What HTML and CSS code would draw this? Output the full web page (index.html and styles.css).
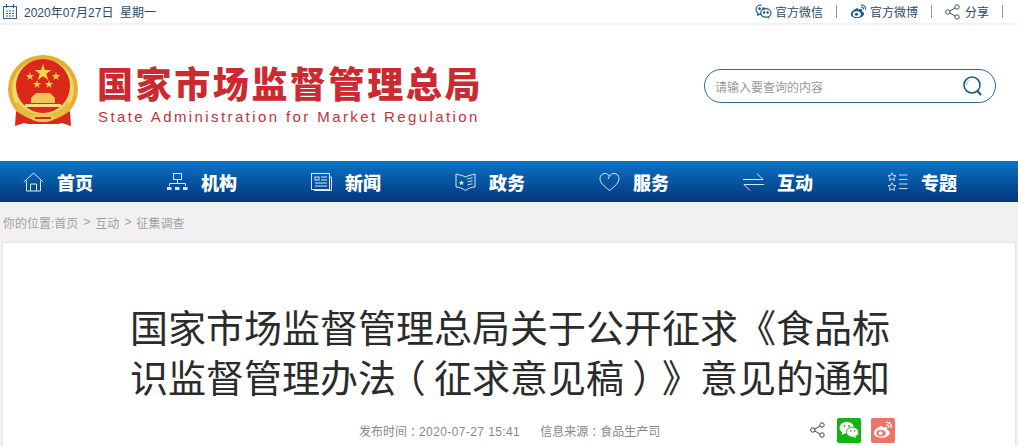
FILE: index.html
```html
<!DOCTYPE html>
<html lang="zh-CN">
<head>
  <meta charset="UTF-8">
  <title>国家市场监督管理总局</title>
  <link rel="stylesheet" href="styles.css">
</head>
<body>
  <div class="topbar">
    <div class="date">
      <svg class="cal-icon" viewBox="0 0 14 15" width="14" height="15" fill="none" stroke="#2f5f8f">
        <rect x="0.5" y="2.5" width="13" height="12"/>
        <path d="M3.5 0v4M10.5 0v4"/>
        <path d="M3 7h2M6 7h2M9 7h2M3 9.5h2M6 9.5h2M9 9.5h2M3 12h2M6 12h2M9 12h2"/>
      </svg>
      <span>2020年07月27日&nbsp; 星期一</span>
    </div>
    <div class="toplinks">
      <a class="toplink">
        <svg viewBox="0 0 18 16" width="17" height="15" fill="none" stroke="#1f5f8f" stroke-width="1.3">
          <path d="M7 1C3.5 1 1 3.2 1 6c0 1.6.8 3 2.2 3.9L2.800 12l2.300-1.200c.5.100 1 .2 1.600.2"/>
          <ellipse cx="11.500" cy="9.500" rx="5.500" ry="4.600"/>
          <path d="M13.500 13.400l1.200 1.800"/>
          <circle cx="4.800" cy="5" r=".8" fill="#1f5f8f"/>
          <circle cx="9" cy="5" r=".8" fill="#1f5f8f"/>
          <circle cx="9.600" cy="9" r=".7" fill="#1f5f8f"/>
          <circle cx="13.400" cy="9" r=".7" fill="#1f5f8f"/>
        </svg>
        <span>官方微信</span>
      </a>
      <i class="sep"></i>
      <a class="toplink">
        <svg viewBox="0 0 18 16" width="17" height="15">
          <path d="M7.500 4.500C4 5.500 .8 8.400 .8 10.800c0 2.500 3.200 4.200 6.700 4.200 4.200 0 7.500-2.200 7.500-4.600 0-1.500-1.300-2.200-2.300-2.500.4-1.100.3-2.200-.6-2.500-1-.4-2.700.2-3.400.6.200-.9-.1-2.200-.7-1.500z" fill="#1f5f8f"/>
          <ellipse cx="7.200" cy="10.800" rx="4.300" ry="3.100" fill="#fff"/>
          <circle cx="6.800" cy="10.900" r="1.700" fill="#1f5f8f"/>
          <path d="M11.500 1.200c3-.6 5.600 1.600 5 4.800M11.800 3.400c1.500-.3 2.800.8 2.500 2.400" fill="none" stroke="#1f5f8f" stroke-width="1.200"/>
        </svg>
        <span>官方微博</span>
      </a>
      <i class="sep"></i>
      <a class="toplink share-link">
        <svg viewBox="0 0 15 16" width="15" height="16" fill="none" stroke="#456" stroke-width="1">
          <circle cx="2.800" cy="8" r="2.200"/><circle cx="12" cy="3" r="2.200"/><circle cx="12" cy="13" r="2.200"/>
          <path d="M4.800 7l5.300-3M4.800 9l5.300 3"/>
        </svg>
        <span>分享</span>
      </a>
      <i class="sep"></i>
    </div>
  </div>

  <header class="masthead">
    <div class="brand">
      <svg class="emblem" viewBox="0 0 70 73" width="70" height="73">
        <ellipse cx="35" cy="34" rx="35" ry="34" fill="#e3b02f"/>
        <ellipse cx="35" cy="34" rx="31" ry="30" fill="#f3d56a"/>
        <circle cx="35" cy="31" r="27" fill="#dc281b"/>
        <polygon points="35,9 37,15 43.500,15 38.300,18.800 40.200,25 35,21.200 29.800,25 31.700,18.800 26.500,15 33,15" fill="#f6d54b"/>
        <polygon points="22,17 23,20 26.200,20 23.600,21.900 24.600,25 22,23.100 19.400,25 20.400,21.900 17.800,20 21,20" fill="#f6d54b"/>
        <polygon points="48,17 49,20 52.200,20 49.600,21.900 50.600,25 48,23.100 45.400,25 46.400,21.900 43.800,20 47,20" fill="#f6d54b"/>
        <polygon points="29,25 30,28 33.200,28 30.600,29.900 31.600,33 29,31.100 26.400,33 27.400,29.900 24.800,28 28,28" fill="#f6d54b"/>
        <polygon points="41,25 42,28 45.200,28 42.600,29.900 43.600,33 41,31.100 38.400,33 39.400,29.900 36.800,28 40,28" fill="#f6d54b"/>
        <path d="M28 38h14l5 5v5H23v-5z" fill="#eec65a"/>
        <rect x="17" y="49" width="36" height="3" fill="#f6dc86"/>
        <path d="M10 46c6 10 14 13 25 13s19-3 25-13l2 4c-5 11-15 16-27 16S13 61 8 50z" fill="#e8bc3f"/>
        <path d="M8 56l6 4 8 4h26l8-4 6-4 1 15-9-3-4 1H20l-4-1-9 3z" fill="#d92a1c"/>
        <ellipse cx="35" cy="63" rx="12" ry="4" fill="#edc655"/>
        <rect x="27" y="62" width="16" height="2" fill="#c8351e"/>
      </svg>
      <div class="brand-text">
        <div class="brand-cn">国家市场监督管理总局</div>
        <div class="brand-en">State Administration for Market Regulation</div>
      </div>
    </div>
    <div class="search">
      <span class="search-hint">请输入要查询的内容</span>
      <svg viewBox="0 0 22 22" width="22" height="22" fill="none" stroke="#1f5a85">
        <circle cx="10" cy="10" r="8" stroke-width="1.600"/>
        <path d="M4.500 10a5.500 5.500 0 0 1 3-5" stroke="#9fc0d8"/>
        <path d="M15.500 16l3.500 4" stroke-width="2"/>
      </svg>
    </div>
  </header>

  <nav class="nav">
    <a class="nav-item">
      <svg viewBox="0 0 21 20" width="21" height="20" fill="none" stroke="#dbe9f6">
        <path d="M.8 10L10.500 1l9.700 9M3.500 8.500V19h14V8.500"/>
        <path d="M7.500 19v-7h6v7"/>
      </svg>
      <span>首页</span>
    </a>
    <a class="nav-item">
      <svg viewBox="0 0 21 20" width="21" height="20" fill="none" stroke="#dbe9f6">
        <rect x="6.500" y="1.500" width="8" height="6"/>
        <path d="M10.500 7.500v4M2.500 14v-2.500h16V14"/>
        <path d="M0 16.500h4.500M8 16.500h4.500M16 16.500h4.500" stroke-width="3"/>
      </svg>
      <span>机构</span>
    </a>
    <a class="nav-item">
      <svg viewBox="0 0 21 20" width="21" height="20" fill="none" stroke="#dbe9f6">
        <rect x=".5" y="1.500" width="18" height="16"/>
        <path d="M18.500 5h2v13.500H3"/>
        <rect x="4" y="5" width="4" height="3"/>
        <path d="M10 5h6M10 8h6M4 11h12M4 14h12"/>
      </svg>
      <span>新闻</span>
    </a>
    <a class="nav-item">
      <svg viewBox="0 0 21 20" width="21" height="20" fill="none" stroke="#dbe9f6">
        <path d="M1 2c3 1 6 1 9.500 3C14 3 17 3 20 2v13c-3 0-6 1-9.500 3.500C7 16 4 15 1 15z"/>
        <path d="M12.500 7c2-.7 3.500-1 5-1.200M12.500 10c2-.7 3.500-1 5-1.200M12.500 13c2-.7 3.500-1 5-1.200"/>
        <path d="M6.500 8l.8 2h2l-1.600 1.300.6 2-1.800-1.200-1.800 1.200.6-2L3.700 10h2z" fill="#dbe9f6" stroke="none"/>
      </svg>
      <span>政务</span>
    </a>
    <a class="nav-item">
      <svg viewBox="0 0 21 20" width="21" height="20" fill="none" stroke="#dbe9f6">
        <path d="M10.500 18.500C5 14 1 11 1 6.500 1 3.500 3.200 1.500 6 1.500c1.800 0 3.500 1 4.500 2.500l-1.500 3"/>
        <path d="M10.500 18.500C16 14 20 11 20 6.500c0-3-2.200-5-5-5-1.800 0-3.500 1-4.500 2.500"/>
      </svg>
      <span>服务</span>
    </a>
    <a class="nav-item">
      <svg viewBox="0 0 21 20" width="21" height="20" fill="none" stroke="#dbe9f6">
        <path d="M0 7.500h20L14 1.500M21 12.500H1L7 18.500"/>
      </svg>
      <span>互动</span>
    </a>
    <a class="nav-item">
      <svg viewBox="0 0 21 20" width="21" height="20" fill="none" stroke="#dbe9f6" stroke-width=".9">
        <path d="M5 .8l1.200 2.600 2.800.3-2.100 1.900.6 2.800L5 7l-2.500 1.400.6-2.800L1 3.700l2.800-.3z"/>
        <path d="M5 10.800l1.200 2.600 2.800.3-2.100 1.900.6 2.800L5 17l-2.500 1.400.6-2.800L1 13.700l2.800-.3z"/>
        <path d="M12 3h8.500M12 7.500h8.500M12 12h8.500M12 16.500h8.500"/>
      </svg>
      <span>专题</span>
    </a>
  </nav>

  <div class="crumbs">你的位置:首页<i class="crumb-sep">&gt;</i>互动<i class="crumb-sep">&gt;</i>征集调查</div>

  <main class="article">
    <h1 class="title">国家市场监督管理总局关于公开征求《食品标识监督管理办法<span class="paren">（</span>征求意见稿<span class="paren">）</span>》意见的通知</h1>
    <div class="meta">
      <span>发布时间<i class="paren">：</i><span class="meta-date">2020-07-27 15:41</span></span>
      <span class="meta-source">信息来源<i class="paren">：</i>食品生产司</span>
      <div class="share">
        <svg class="share-icon" viewBox="0 0 15 16" width="15" height="16" fill="none" stroke="#444" stroke-width="1">
          <circle cx="2.800" cy="8" r="2.200"/><circle cx="12" cy="3" r="2.200"/><circle cx="12" cy="13" r="2.200"/>
          <path d="M4.800 7l5.300-3M4.800 9l5.300 3"/>
        </svg>
        <span class="share-btn wechat">
          <svg viewBox="0 0 22 20" width="20" height="18">
            <ellipse cx="8.500" cy="7.500" rx="8" ry="6.800" fill="#fff"/>
            <path d="M3.500 12l-.8 3.500 4-2z" fill="#fff"/>
            <ellipse cx="15" cy="12.500" rx="6.800" ry="5.600" fill="#fff" stroke="#12b312"/>
            <path d="M18 17l1.200 2.500-3.500-2z" fill="#fff"/>
            <circle cx="6" cy="5.500" r="1.100" fill="#12b312"/><circle cx="11" cy="5.500" r="1.100" fill="#12b312"/>
            <circle cx="12.800" cy="11" r=".9" fill="#12b312"/><circle cx="17.300" cy="11" r=".9" fill="#12b312"/>
          </svg>
        </span>
        <span class="share-btn weibo">
          <svg viewBox="0 0 18 16" width="20" height="18">
            <path d="M7.500 4.500C4 5.500 .8 8.400 .8 10.800c0 2.500 3.200 4.200 6.700 4.200 4.200 0 7.500-2.200 7.500-4.600 0-1.500-1.300-2.200-2.300-2.500.4-1.100.3-2.200-.6-2.500-1-.4-2.700.2-3.400.6.200-.9-.1-2.200-.7-1.500z" fill="#fff"/>
            <ellipse cx="7.200" cy="10.800" rx="4.300" ry="3.100" fill="#ee746a"/>
            <circle cx="6.800" cy="10.900" r="1.700" fill="#fff"/>
            <path d="M11.500 1.200c3-.6 5.600 1.600 5 4.800M11.800 3.400c1.500-.3 2.800.8 2.500 2.400" fill="none" stroke="#fff" stroke-width="1.200"/>
          </svg>
        </span>
      </div>
    </div>
  </main>
</body>
</html>
```

FILE: styles.css
```css
* {
  margin: 0;
  padding: 0;
  box-sizing: border-box;
}

html, body {
  height: 100%;
  overflow: hidden;
}

body {
  font-family: "Liberation Sans", "Noto Sans CJK SC", sans-serif;
  background: #f2f0f2;
}

i {
  font-style: normal;
}

.topbar {
  height: 25px;
  background: #fff;
  border-bottom: 2px solid #f0f0f0;
  display: flex;
  justify-content: space-between;
  align-items: center;
  padding: 0 15px 0 3px;
  font-size: 12px;
  color: #2c4a68;
}

.date {
  display: flex;
  align-items: center;
  gap: 7px;
}

.toplinks {
  display: flex;
  align-items: center;
}

.toplink {
  display: flex;
  align-items: center;
  gap: 3px;
}

.share-link {
  gap: 5px;
}

.sep {
  width: 1px;
  height: 13px;
  background: #8a98a6;
  margin: 0 13px;
}

.toplinks .sep:last-child {
  margin-right: 0;
}

.masthead {
  height: 136px;
  background: #fff;
  display: flex;
  justify-content: space-between;
  align-items: center;
  padding: 0 22px 0 8px;
}

.brand {
  display: flex;
  align-items: center;
  gap: 19px;
  margin-bottom: 3px;
}

.brand-text {
  margin-top: 4px;
}

.brand-cn {
  font-family: "Noto Sans CJK SC", sans-serif;
  font-size: 36px;
  font-weight: 900;
  line-height: 40px;
  letter-spacing: 2.6px;
  color: #cc2a30;
  white-space: nowrap;
}

.brand-en {
  font-size: 15px;
  line-height: 18px;
  letter-spacing: 2.4px;
  color: #c5323a;
  white-space: nowrap;
  margin-top: 6px;
  margin-left: 1px;
}

.search {
  width: 292px;
  height: 34px;
  margin-bottom: 14px;
  border: 1px solid #2a6c94;
  border-radius: 17px;
  display: flex;
  justify-content: space-between;
  align-items: center;
  padding: 0 11px 0 10px;
  font-size: 12px;
  color: #999;
}

.nav {
  height: 41px;
  background: linear-gradient(#0c74c4, #02367e);
  display: flex;
  padding-left: 23px;
}

.nav-item {
  flex: none;
  width: 144px;
  display: flex;
  align-items: center;
  gap: 13px;
  color: #fff;
  font-family: "Noto Sans CJK SC", sans-serif;
  font-size: 18px;
  font-weight: 900;
}

.crumbs {
  height: 40px;
  padding: 0 3px;
  display: flex;
  align-items: center;
  font-size: 12px;
  color: #a0a0a0;
}

.crumb-sep {
  margin: 0 5px;
}

.article {
  margin: 0 2px;
  height: 204px;
  background: #fff;
  border: 1px solid #e4e4e4;
  border-bottom: 0;
}

.title {
  width: 770px;
  margin: 58px 0 0 127px;
  font-family: "Noto Sans CJK SC", sans-serif;
  font-size: 38px;
  font-weight: 400;
  line-height: 50px;
  color: #2b2b2b;
  text-spacing-trim: space-all;
}

/* full-width punctuation sits centred in its cell */
.paren {
  display: inline-block;
  width: 1em;
  text-align: center;
  font-family: "Noto Sans CJK SC", sans-serif;
  font-feature-settings: "palt";
  line-height: 1;
}

.meta {
  display: flex;
  align-items: center;
  margin-top: 14px;
  padding: 0 120px 0 356px;
  height: 30px;
  font-size: 12px;
  color: #888;
}

.meta-date {
  letter-spacing: .4px;
}

.meta-source {
  margin-left: 20px;
}

.share {
  margin-left: auto;
  display: flex;
  align-items: center;
  gap: 10px;
}

.share-icon {
  margin-right: 2px;
}

.share-btn {
  width: 24px;
  height: 25px;
  border-radius: 2px;
  display: flex;
  align-items: center;
  justify-content: center;
}

.wechat {
  background: #12b312;
}

.weibo {
  background: #ee746a;
}
```
